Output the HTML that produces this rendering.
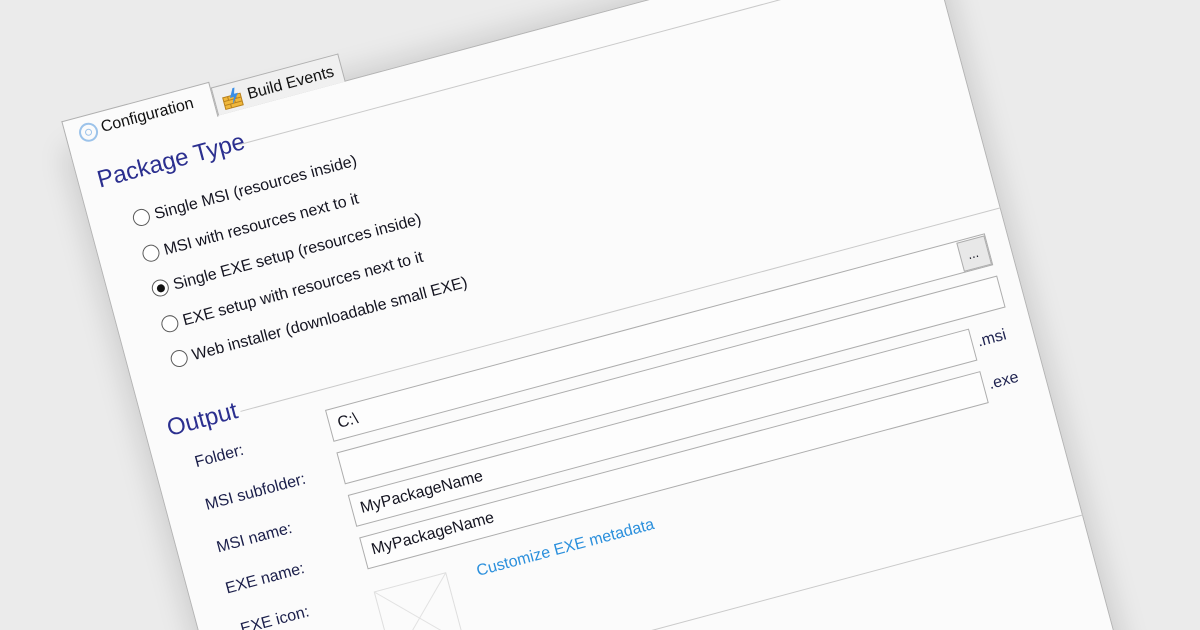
<!DOCTYPE html>
<html><head><meta charset="utf-8"><style>
html,body{margin:0;padding:0;width:1200px;height:630px;overflow:hidden;}
body{background:#ebebeb;position:relative;font-family:"Liberation Sans",sans-serif;}
#clip{position:absolute;left:0;top:0;width:1200px;height:630px;overflow:hidden;}
#w{position:absolute;left:325px;top:410px;width:0;height:0;transform-origin:0 0;transform:rotate(-15deg);}
#w div{position:absolute;box-sizing:border-box;}
.panel{left:-180px;top:-313px;width:885px;height:950px;background:#fbfbfb;border:1px solid #b4b4b4;box-shadow:0 0 28px 6px rgba(0,0,0,0.13);}
.tab{background:#fbfbfb;border:1px solid #b0b0b0;border-bottom:none;}
.t{font-size:16px;line-height:1;white-space:nowrap;color:#141420;}
.h{font-size:24px;line-height:1;color:#2b2f8f;white-space:nowrap;}
.ln{height:0;border-top:1px solid #cacaca;}
.rad{width:17px;height:17px;border-radius:50%;border:1px solid #5a5a5a;background:#fff;}
.f{left:0;height:33px;border:1.5px solid #adadad;background:#fdfdfd;}
.lbl{font-size:16px;line-height:1;color:#1a1e4a;white-space:nowrap;}
</style></head><body>
<div id="clip">
<div id="w">
  <div class="panel"></div>
  <div class="tab" style="left:-27px;top:-341px;width:132px;height:29px;background:#f0f0f0;"></div>
  <div class="tab" style="left:-180px;top:-347px;width:153px;height:36px;"></div>
  <div style="left:-166px;top:-339px;width:19px;height:19px;border-radius:50%;border:2px solid #9cc3ea;"></div>
  <div style="left:-160px;top:-333px;width:7px;height:7px;border-radius:50%;border:1.5px solid #9cc3ea;"></div>
  <div class="t" style="left:-143px;top:-338px;color:#111;">Configuration</div>
  <div style="left:-19px;top:-335px;width:20px;height:20px;">
    <svg width="20" height="20" viewBox="0 0 20 20"><rect x="1" y="7" width="18" height="12" fill="#f0b83c" stroke="#b8801c"/><path d="M1 11H19M1 15H19M6 7V11M12 11V15M7 15V19M14 7V11" stroke="#b8801c" stroke-width="1"/><path d="M13 0L8 9H12L9 16L17 6H13L15 0Z" fill="#3a8ee6"/></svg>
  </div>
  <div class="t" style="left:7px;top:-332px;color:#111;">Build Events</div>

  <div class="h" style="left:-160px;top:-292px;">Package Type</div>
  <div class="ln" style="left:-15px;top:-279px;width:720px;"></div>

  <div class="rad" style="left:-136px;top:-242px;"></div>
  <div class="t" style="left:-114px;top:-240px;">Single MSI (resources inside)</div>
  <div class="rad" style="left:-136px;top:-205px;"></div>
  <div class="t" style="left:-114px;top:-203px;">MSI with resources next to it</div>
  <div class="rad" style="left:-136px;top:-169px;"></div>
  <div style="left:-131px;top:-164px;width:8px;height:8px;border-radius:50%;background:#111;"></div>
  <div class="t" style="left:-114px;top:-167px;">Single EXE setup (resources inside)</div>
  <div class="rad" style="left:-136px;top:-132px;"></div>
  <div class="t" style="left:-114px;top:-130px;">EXE setup with resources next to it</div>
  <div class="rad" style="left:-136px;top:-96px;"></div>
  <div class="t" style="left:-114px;top:-94px;">Web installer (downloadable small EXE)</div>

  <div class="h" style="left:-157px;top:-34px;">Output</div>
  <div class="ln" style="left:-82px;top:-21px;width:787px;"></div>

  <div class="f" style="top:0;width:683px;"></div>
  <div style="left:653px;top:2px;width:29px;height:30px;background:#e8e8e8;border:1.5px solid #adadad;"></div>
  <div class="t" style="left:661px;top:10px;font-size:13px;">...</div>
  <div class="t" style="left:9px;top:9px;">C:\</div>
  <div class="f" style="top:44px;width:684px;"></div>
  <div class="f" style="top:88px;width:643px;"></div>
  <div class="t" style="left:9px;top:97px;">MyPackageName</div>
  <div class="t" style="left:648px;top:96px;color:#1f2350;">.msi</div>
  <div class="f" style="top:131.5px;width:643px;"></div>
  <div class="t" style="left:9px;top:140px;">MyPackageName</div>
  <div class="t" style="left:648px;top:140px;color:#1f2350;">.exe</div>

  <div class="lbl" style="left:-139px;top:10px;">Folder:</div>
  <div class="lbl" style="left:-140px;top:54px;">MSI subfolder:</div>
  <div class="lbl" style="left:-140px;top:98px;">MSI name:</div>
  <div class="lbl" style="left:-142px;top:140px;">EXE name:</div>
  <div class="lbl" style="left:-138px;top:183px;">EXE icon:</div>

  <div style="left:0;top:188px;width:75px;height:75px;border:1px solid #dedede;">
    <svg width="73" height="73" style="position:absolute;left:0;top:0"><path d="M0 0L73 73M73 0L0 73" stroke="#e2e2e2"/></svg>
  </div>
  <div class="t" style="left:105px;top:188px;color:#2a8fdc;">Customize EXE metadata</div>

  <div class="ln" style="left:-60px;top:297px;width:765px;"></div>
</div>
</div>
</body></html>
